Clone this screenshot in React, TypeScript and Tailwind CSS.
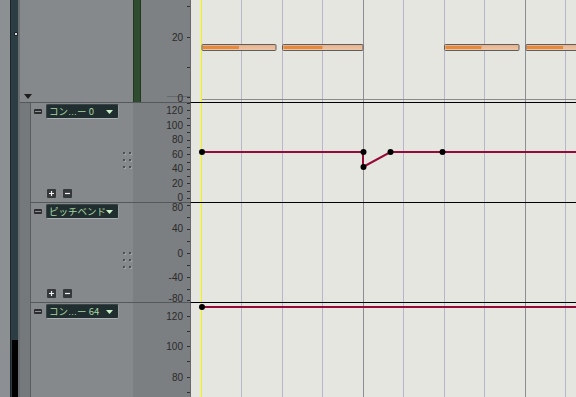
import React from "react";

const OFF = 191;
const BEATS = [241, 282, 322, 403, 444, 484, 565];
const BARS = [363, 525];
const LABEL_FONT = '"Liberation Sans", Arial, sans-serif';

function GridBg({ h }: { h: number }) {
  return (
    <>
      {BEATS.map((x) => (
        <line key={x} x1={x - OFF + 0.5} x2={x - OFF + 0.5} y1={0} y2={h} stroke="#b8b6cb" strokeWidth={1} />
      ))}
      {BARS.map((x) => (
        <line key={x} x1={x - OFF + 0.5} x2={x - OFF + 0.5} y1={0} y2={h} stroke="#8d8d96" strokeWidth={1} />
      ))}
      <line x1={201 - OFF + 0.5} x2={201 - OFF + 0.5} y1={0} y2={h} stroke="#f4f400" strokeWidth={1} />
    </>
  );
}

type Label = { y: number; t: string };

function Ruler({
  w,
  h,
  top,
  labels,
  ticks,
  children,
}: {
  w: number;
  h: number;
  top: number;
  labels: Label[];
  ticks: number[];
  children?: React.ReactNode;
}) {
  const tickEnd = w;
  const labelX = w - 7;
  return (
    <svg width={w} height={h} className="block">
      {children}
      {ticks.map((y) => (
        <line key={y} x1={tickEnd - 3} x2={tickEnd} y1={y - top + 0.5} y2={y - top + 0.5} stroke="#2e2e2e" strokeWidth={1} />
      ))}
      {labels.map((l) => (
        <text
          key={l.t}
          x={labelX}
          y={l.y - top}
          textAnchor="end"
          dominantBaseline="central"
          fontSize={10}
          fontFamily={LABEL_FONT}
          fill="#2a2a2a"
        >
          {l.t}
        </text>
      ))}
    </svg>
  );
}

function Note({ x1, x2, ow }: { x1: number; x2: number; ow: number }) {
  const x = x1 - OFF;
  return (
    <g>
      <rect x={x + 0.5} y={44.5} width={x2 - x1} height={6} rx={1} fill="url(#noteGrad)" stroke="#5e5e5e" strokeWidth={1} />
      <rect x={x + 1.5} y={46} width={ow} height={3} fill="#e6893c" />
    </g>
  );
}

function Dot({ x, y }: { x: number; y: number }) {
  return <circle cx={x - OFF} cy={y} r={3} fill="#000" />;
}

const CJK = '"Noto Sans CJK JP", "Liberation Sans", sans-serif';

function LaneHeader({ name, buttons }: { name: React.ReactNode; buttons: boolean }) {
  return (
    <div className="flex h-full flex-col">
      <div className="mt-[1px] flex items-center pl-[3px]">
        <div className="flex h-[5px] w-[8px] items-center justify-center rounded-[1px] bg-[#2b2d2f]">
          <div className="h-[1px] w-[6px] bg-[#8e9194]" />
        </div>
        <div className="ml-[4px] flex h-[15px] w-[73px] items-center justify-between rounded-[2px] border border-[#3a4446] border-b-[#a9afb0] border-r-[#959b9c] bg-[#212e30] pl-[2px] pr-[5px]">
          <span className="whitespace-nowrap text-[9.5px] leading-none text-[#a6d6a0]" style={{ fontFamily: CJK }}>
            {name}
          </span>
          <svg width="7" height="4" viewBox="0 0 7 4">
            <path d="M0 0 L7 0 L3.5 4 Z" fill="#c9f2c6" />
          </svg>
        </div>
      </div>
      {buttons && (
        <>
          <div className="mr-[2px] mt-[33px] grid grid-cols-2 gap-x-[4px] gap-y-[5px] self-end">
            {[0, 1, 2, 3, 4, 5].map((i) => (
              <div key={i} className="h-[2px] w-[2px] bg-[#4d5053] shadow-[1px_1px_0_#a2a5a8]" />
            ))}
          </div>
          <div className="mb-[4px] ml-[16px] mt-auto flex gap-[7px]">
            <div className="flex h-[9px] w-[9px] items-center justify-center rounded-[1px] bg-[#36393c]">
              <svg width="7" height="7" viewBox="0 0 7 7">
                <path d="M3.5 1 V6 M1 3.5 H6" stroke="#f2f2f2" strokeWidth="1.2" />
              </svg>
            </div>
            <div className="flex h-[9px] w-[9px] items-center justify-center rounded-[1px] bg-[#36393c]">
              <svg width="7" height="7" viewBox="0 0 7 7">
                <path d="M1 3.5 H6" stroke="#f2f2f2" strokeWidth="1.2" />
              </svg>
            </div>
          </div>
        </>
      )}
    </div>
  );
}

function Ell() {
  return (
    <span className="text-[9px]" style={{ fontFamily: LABEL_FONT }}>
      …
    </span>
  );
}

function Lane({
  h,
  top,
  name,
  buttons,
  labels,
  ticks,
  children,
}: {
  h: number;
  top: number;
  name: React.ReactNode;
  buttons: boolean;
  labels: Label[];
  ticks: number[];
  children?: React.ReactNode;
}) {
  const ch = h - 1;
  return (
    <div className="flex" style={{ height: h }}>
      <div className="w-[102px] border-t border-[#55585b] bg-[#86898c]">
        <LaneHeader name={name} buttons={buttons} />
      </div>
      <div className="w-[57px] border-t border-[#55585b] bg-[#7c7f82]">
        <Ruler w={57} h={ch} top={top} labels={labels} ticks={ticks} />
      </div>
      <div className="w-[386px] border-l border-t border-l-[#66686b] border-t-black bg-[#e6e6e1]">
        <svg width={385} height={ch} className="block">
          <GridBg h={ch} />
          <g transform={`translate(0 ${-top})`}>{children}</g>
        </svg>
      </div>
    </div>
  );
}

export default function App() {
  const l1Top = 103;
  const l1Ticks: number[] = [];
  for (let k = 0; k <= 13; k++) l1Ticks.push(Math.round(198 - 7.3 * k));
  const l1Labels: Label[] = [
    { y: 110.5, t: "120" },
    { y: 125, t: "100" },
    { y: 139.6, t: "80" },
    { y: 154.2, t: "60" },
    { y: 168.8, t: "40" },
    { y: 183.4, t: "20" },
    { y: 197.5, t: "0" },
  ];
  const l2Ticks = [205, 217, 229, 241, 253, 265, 277, 289, 300];
  const l2Labels: Label[] = [
    { y: 207.5, t: "80" },
    { y: 228.5, t: "40" },
    { y: 253, t: "0" },
    { y: 277.5, t: "-40" },
    { y: 298, t: "-80" },
  ];
  const l3Ticks = [316, 331, 346, 361, 377, 392];
  const l3Labels: Label[] = [
    { y: 316, t: "120" },
    { y: 346, t: "100" },
    { y: 377, t: "80" },
  ];

  return (
    <div className="flex h-[397px] w-[576px] overflow-hidden bg-[#86898c]">
      {/* left strip */}
      <div className="flex h-full w-[20px]">
        <div className="w-[10px] bg-[#8d9093]" />
        <div className="w-[1px] bg-[#1c2529]" />
        <div className="flex w-[7px] flex-col bg-[#2c3d44]">
          <div className="ml-[3px] mt-[32px] flex h-[4px] w-[4px] items-center justify-center rounded-full bg-[#151d20]">
            <div className="h-[2px] w-[2px] bg-[#dcdcdc]" />
          </div>
          <div className="ml-[1px] mt-auto h-[57px] w-[6px] bg-black" />
        </div>
        <div className="w-[2px] bg-[#6a6d70]" />
      </div>

      <div className="flex w-[556px] flex-col">
        {/* top section */}
        <div className="flex h-[102px]">
          <div className="flex w-[113px] flex-col justify-end bg-[#86898c]">
            <svg width="8" height="5" viewBox="0 0 8 5" className="mb-[3px] ml-[4px]">
              <path d="M0 0 L8 0 L4 5 Z" fill="#1e1e1e" />
            </svg>
          </div>
          <div className="w-[8px] border-x border-[#233823] bg-[#2f4c30]" />
          <div className="w-[49px] bg-[#7e8184]">
            <Ruler
              w={49}
              h={102}
              top={0}
              labels={[
                { y: 37, t: "20" },
                { y: 98, t: "0" },
              ]}
              ticks={[6, 37, 67, 97]}
            >
              <line x1={26} x2={49} y1={96.5} y2={96.5} stroke="#66696c" strokeWidth={1} />
            </Ruler>
          </div>
          <div className="w-[386px] border-l border-[#66686b] bg-[#e6e6e1]">
            <svg width={385} height={102} className="block">
              <defs>
                <linearGradient id="noteGrad" x1="0" y1="0" x2="0" y2="1">
                  <stop offset="0" stopColor="#e6b08a" />
                  <stop offset="1" stopColor="#efc8a8" />
                </linearGradient>
              </defs>
              <GridBg h={102} />
              <line x1={202 - OFF} x2={385} y1={99.5} y2={99.5} stroke="#8a8a8a" strokeWidth={1} />
              <Note x1={201.5} x2={275.5} ow={36} />
              <Note x1={282} x2={362.5} ow={39} />
              <Note x1={444} x2={518.5} ow={36} />
              <Note x1={525.5} x2={610} ow={36} />
            </svg>
          </div>
        </div>

        {/* lanes */}
        <div className="flex flex-1">
          <div className="w-[11px] border-r border-t border-r-[#5a5d60] border-t-[#55585b] bg-[#76797c]" />
          <div className="flex w-[545px] flex-col">
            <Lane
              h={100}
              top={l1Top}
              name={
                <>
                  コン<Ell />ー 0
                </>
              }
              buttons
              labels={l1Labels}
              ticks={l1Ticks}
            >
              <polyline
                points={`${202 - OFF},152 ${363 - OFF},152 ${363 - OFF},167 ${390.5 - OFF},152 ${576 - OFF},152`}
                fill="none"
                stroke="#960a3a"
                strokeWidth={2}
              />
              <Dot x={202} y={152} />
              <Dot x={363.5} y={152} />
              <Dot x={363.5} y={167} />
              <Dot x={390.5} y={152} />
              <Dot x={442.5} y={152} />
            </Lane>
            <Lane h={100} top={203} name="ピッチベンド" buttons labels={l2Labels} ticks={l2Ticks} />
            <Lane
              h={95}
              top={303}
              name={
                <>
                  コン<Ell />ー 64
                </>
              }
              buttons={false}
              labels={l3Labels}
              ticks={l3Ticks}
            >
              <line x1={202 - OFF} x2={385} y1={307} y2={307} stroke="#960a3a" strokeWidth={2} />
              <Dot x={202} y={307} />
            </Lane>
          </div>
        </div>
      </div>
    </div>
  );
}
